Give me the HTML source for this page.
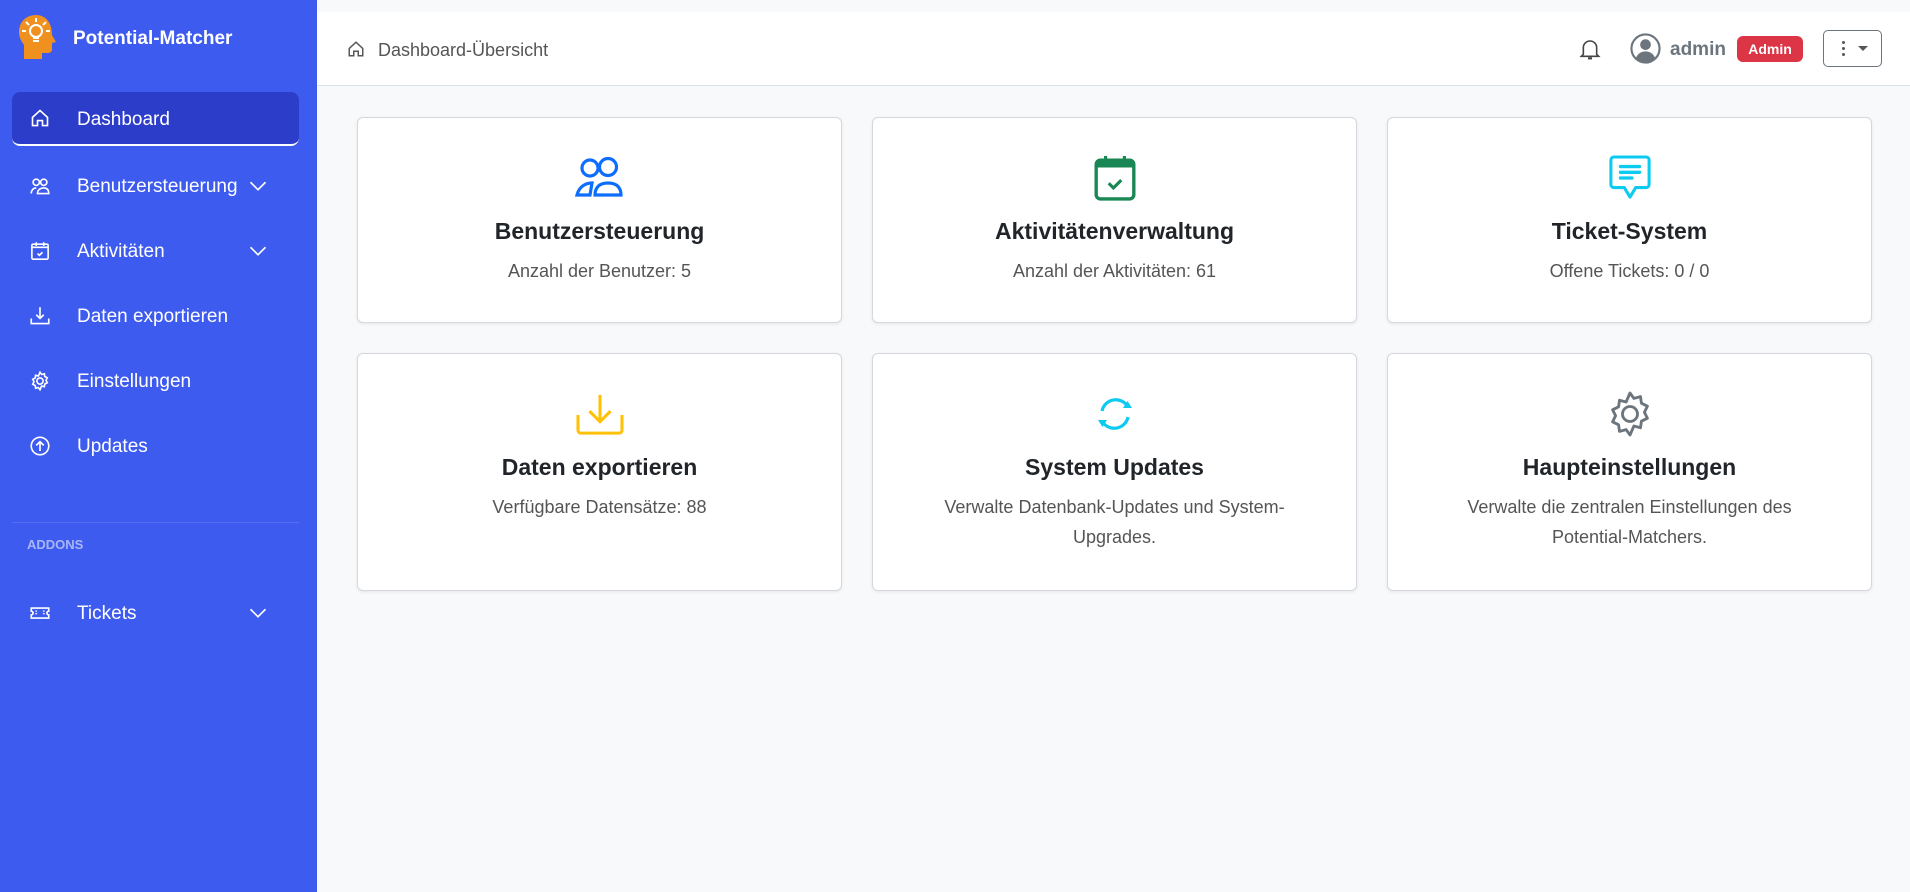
<!DOCTYPE html>
<html><head><meta charset="utf-8"><style>
*{box-sizing:border-box;margin:0;padding:0}
body{width:1910px;height:892px;overflow:hidden;font-family:"Liberation Sans",sans-serif;background:#f8f9fa;position:relative}
.sb{position:absolute;left:0;top:0;width:317px;height:892px;background:#3e5bef;color:#fff}
.brand{position:absolute;left:73px;top:28px;font-size:19px;font-weight:bold}
.nav{position:absolute;left:12px;width:287px;height:54px;display:flex;align-items:center;font-size:19px}
.nav svg{position:absolute;left:18px}
.nav span{position:absolute;left:65px;top:17px}
.nav .chev{position:absolute;left:236px}
.active{background:#2c3dc9;border-radius:8px;border-bottom:2px solid #fff}
.hdr{position:absolute;left:317px;top:12px;width:1593px;height:74px;background:#fff;border-bottom:1px solid #dee2e6}
.card{position:absolute;width:485px;background:#fff;border:1px solid #d5d8dc;border-radius:6px;box-shadow:0 1px 3px rgba(0,0,0,.08);text-align:center;padding-top:38px}
.ic{height:44px;display:flex;align-items:center;justify-content:center}
.card h3{font-size:23px;font-weight:bold;color:#212529;line-height:30px;margin-top:16px}
.card p{font-size:18px;color:#555;line-height:30px;margin-top:10px}
</style></head><body>
<div class="sb">
<svg style="position:absolute;left:18px;top:14px" width="40" height="46" viewBox="0 0 40 46"><path d="M18 1C8 1 1 8 1 18c0 6 3 10 5 13v14h18v-6h6c3 0 4-2 4-4v-6l4-1-4-7C34 9 28 1 18 1z" fill="#f0901e"/><circle cx="18" cy="17" r="6" fill="none" stroke="#fff" stroke-width="2"/><path d="M15 24h6M15 27h6M18 4v4M8 8l3 3M28 8l-3 3M4 17h4M28 17h4" stroke="#fff" stroke-width="2"/></svg>
<div class="brand">Potential-Matcher</div>
<div class="nav active" style="top:92px"><svg width="20" height="20" viewBox="0 0 16 16" fill="none" stroke="#fff" stroke-width="1.3"><path d="M2 7.5L8 2l6 5.5V14H10v-4H6v4H2z"/></svg><span>Dashboard</span></div>
<div class="nav" style="top:159px"><svg width="20" height="20" viewBox="0 0 16 16" fill="none" stroke="#fff" stroke-width="1.3"><circle cx="5" cy="5" r="2.5"/><circle cx="11" cy="5" r="2.5"/><path d="M1 14c0-3 2-4.5 4-4.5M6 14c0-3 2.5-4.5 5-4.5s4 1.5 4 4.5z"/></svg><span>Benutzersteuerung</span><svg class="chev" style="left:236px" width="20" height="20" viewBox="0 0 16 16" fill="none" stroke="#fff" stroke-width="1.3"><path d="M2 5l6 6 6-6"/></svg></div>
<div class="nav" style="top:224px"><svg width="20" height="20" viewBox="0 0 16 16" fill="none" stroke="#fff" stroke-width="1.3"><rect x="1.5" y="2.5" width="13" height="12" rx="1"/><path d="M1.5 5h13M5 1v3M11 1v3M6 10l1.5 1.5L10 9"/></svg><span>Aktivitäten</span><svg class="chev" width="20" height="20" viewBox="0 0 16 16" fill="none" stroke="#fff" stroke-width="1.3"><path d="M2 5l6 6 6-6"/></svg></div>
<div class="nav" style="top:289px"><svg width="20" height="20" viewBox="0 0 16 16" fill="none" stroke="#fff" stroke-width="1.3"><path d="M1 10v4h14v-4M8 1v9M5 7l3 3 3-3"/></svg><span>Daten exportieren</span></div>
<div class="nav" style="top:354px"><svg width="20" height="20" viewBox="0 0 16 16" fill="none" stroke="#fff" stroke-width="1.3"><circle cx="8" cy="8" r="2.5"/><path d="M8 1l1.3 1.8 2.2-.6.3 2.2 2 1-1 2 1 2-2 1-.3 2.2-2.2-.6L8 15l-1.3-1.8-2.2.6-.3-2.2-2-1 1-2-1-2 2-1 .3-2.2 2.2.6z"/></svg><span>Einstellungen</span></div>
<div class="nav" style="top:419px"><svg width="20" height="20" viewBox="0 0 16 16" fill="none" stroke="#fff" stroke-width="1.3"><circle cx="8" cy="8" r="7"/><path d="M8 12V4.5M5 7.5l3-3 3 3"/></svg><span>Updates</span></div>
<div style="position:absolute;left:12px;top:522px;width:287px;border-top:1px solid rgba(255,255,255,.12)"></div>
<div style="position:absolute;left:27px;top:537px;font-size:13px;font-weight:bold;color:rgba(255,255,255,.55)">ADDONS</div>
<div class="nav" style="top:586px"><svg width="20" height="20" viewBox="0 0 16 16" fill="none" stroke="#fff" stroke-width="1.3"><path d="M1 4h14v2.5a1.5 1.5 0 000 3V12H1V9.5a1.5 1.5 0 000-3z"/><path d="M5 6v4M11 6v4" stroke-dasharray="1 1"/></svg><span>Tickets</span><svg class="chev" width="20" height="20" viewBox="0 0 16 16" fill="none" stroke="#fff" stroke-width="1.3"><path d="M2 5l6 6 6-6"/></svg></div>
</div>
<div class="hdr">
<svg style="position:absolute;left:30px;top:28px" width="18" height="18" viewBox="0 0 16 16" fill="none" stroke="#555" stroke-width="1.3"><path d="M2 7.5L8 2l6 5.5V14H10v-4H6v4H2z"/></svg>
<div style="position:absolute;left:61px;top:28px;font-size:18px;color:#555">Dashboard-Übersicht</div>
<svg style="position:absolute;left:1262px;top:25px" width="22" height="24" viewBox="0 0 16 18" fill="none" stroke="#444" stroke-width="1.2"><path d="M3 13V8a5 5 0 0110 0v5l1.5 1.5h-13z"/><path d="M6.5 16h3" stroke-width="1.6"/></svg>
<svg style="position:absolute;left:1313px;top:21px" width="31" height="31" viewBox="0 0 32 32"><circle cx="16" cy="16" r="14.5" fill="none" stroke="#6c757d" stroke-width="2.2"/><circle cx="16" cy="12" r="5.5" fill="#6c757d"/><path d="M6 26c2-5 6-7 10-7s8 2 10 7a14 14 0 01-20 0z" fill="#6c757d"/></svg>
<div style="position:absolute;left:1353px;top:27px;font-size:19px;font-weight:bold;color:#6c757d">admin</div>
<div style="position:absolute;left:1420px;top:24px;width:66px;height:26px;background:#dc3545;border-radius:6px;color:#fff;font-size:14px;font-weight:bold;text-align:center;line-height:26px">Admin</div>
<div style="position:absolute;left:1506px;top:18px;width:59px;height:37px;border:1px solid #6c757d;border-radius:5px">
<div style="position:absolute;left:18px;top:10px;width:3px;height:3px;background:#555;border-radius:50%;box-shadow:0 6px 0 #555,0 12px 0 #555"></div>
<div style="position:absolute;left:34px;top:15px;border-left:5px solid transparent;border-right:5px solid transparent;border-top:5px solid #555"></div>
</div>
</div>

<div class="card" style="left:357px;top:117px;height:206px">
<div class="ic"><svg width="52" height="42" viewBox="0 0 52 42" fill="none" stroke="#0d6efd" stroke-width="3.2"><circle cx="16" cy="11" r="8"/><circle cx="34" cy="10" r="8.5"/><path d="M18 26c-7 0-13 4-15 12h13zM21 38c0-8 5-12 13-12s13 4 13 12z"/></svg></div>
<h3>Benutzersteuerung</h3><p>Anzahl der Benutzer: 5</p></div>
<div class="card" style="left:872px;top:117px;height:206px">
<div class="ic"><svg width="44" height="46" viewBox="0 0 42 44" fill="none"><rect x="3" y="5" width="36" height="37" rx="4" stroke="#198754" stroke-width="3.2"/><path d="M3 5h36v7H3z" fill="#198754"/><path d="M12 1v6M30 1v6" stroke="#198754" stroke-width="3"/><path d="M15 27l4.5 4.5L27 24" stroke="#198754" stroke-width="3"/></svg></div>
<h3>Aktivitätenverwaltung</h3><p>Anzahl der Aktivitäten: 61</p></div>
<div class="card" style="left:1387px;top:117px;height:206px">
<div class="ic"><svg width="42" height="46" viewBox="0 0 44 48" fill="none" stroke="#0dcaf0" stroke-width="3.2" stroke-linejoin="round"><path d="M5 2h34a3 3 0 013 3v26a3 3 0 01-3 3H28l-6 10-6-10H5a3 3 0 01-3-3V5a3 3 0 013-3z"/><path d="M12 12h20M12 18h20M12 24h12" stroke-width="3.5" stroke-linecap="round"/></svg></div>
<h3>Ticket-System</h3><p>Offene Tickets: 0 / 0</p></div>

<div class="card" style="left:357px;top:353px;height:238px">
<div class="ic"><svg width="50" height="44" viewBox="0 0 52 46" fill="none" stroke="#ffc107" stroke-width="3.2"><path d="M3 24v16a3 3 0 003 3h40a3 3 0 003-3V24M26 3v28M15 20l11 11 11-11"/></svg></div>
<h3>Daten exportieren</h3><p>Verfügbare Datensätze: 88</p></div>
<div class="card" style="left:872px;top:353px;height:238px">
<div class="ic"><svg width="46" height="46" viewBox="0 0 46 46" fill="none" stroke="#0dcaf0" stroke-width="3.2"><path d="M10 20A14 14 0 0136 16M36 26A14 14 0 0110 30"/><path d="M31 17h9l-4.5-7z M15 29H6l4.5 7z" fill="#0dcaf0" stroke="none"/></svg></div>
<h3>System Updates</h3><p>Verwalte Datenbank-Updates und System-<br>Upgrades.</p></div>
<div class="card" style="left:1387px;top:353px;height:238px">
<div class="ic"><svg width="48" height="48" viewBox="0 0 16 16" fill="none" stroke="#6c757d" stroke-width=".95"><circle cx="8" cy="8" r="2.5"/><path d="M8 1l1.3 1.8 2.2-.6.3 2.2 2 1-1 2 1 2-2 1-.3 2.2-2.2-.6L8 15l-1.3-1.8-2.2.6-.3-2.2-2-1 1-2-1-2 2-1 .3-2.2 2.2.6z" stroke-linejoin="round"/></svg></div>
<h3>Haupteinstellungen</h3><p>Verwalte die zentralen Einstellungen des<br>Potential-Matchers.</p></div>
</body></html>
